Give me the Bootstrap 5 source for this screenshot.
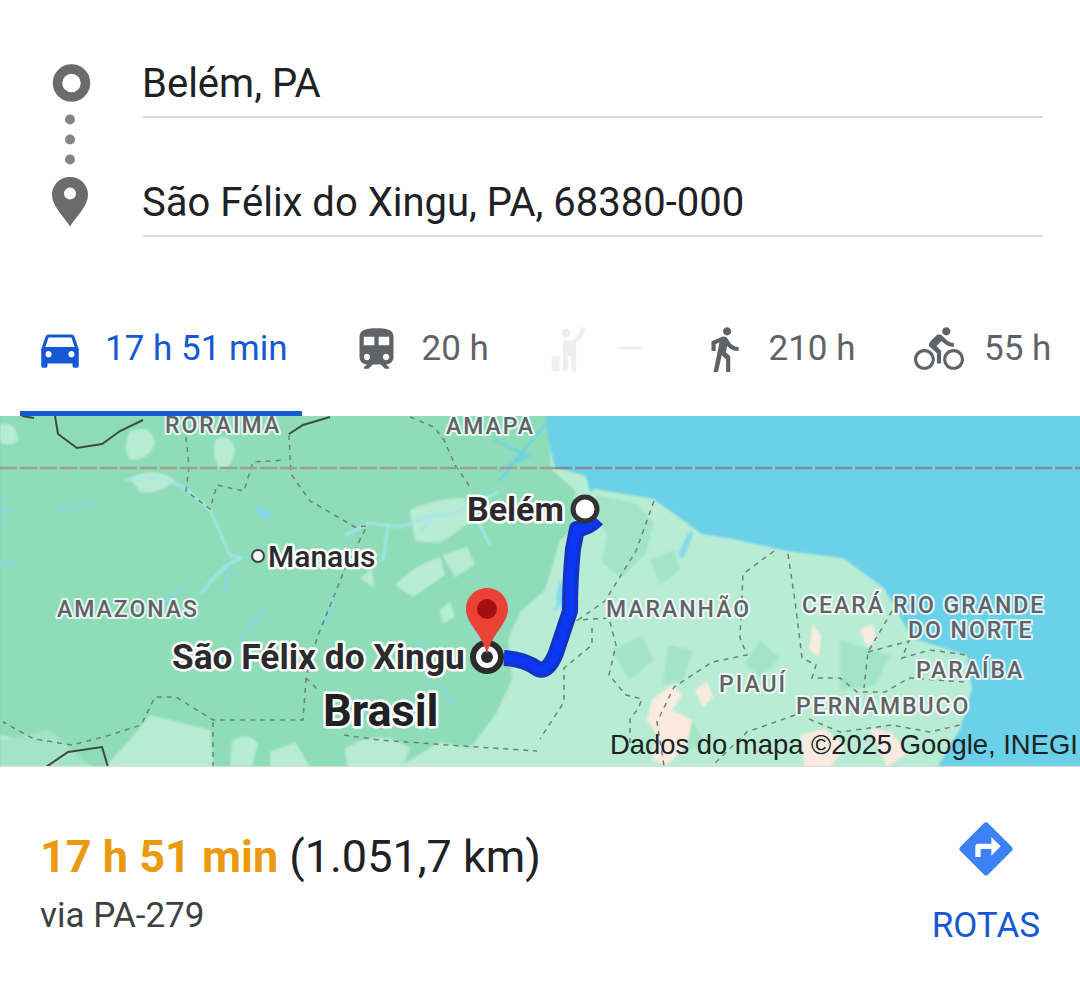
<!DOCTYPE html>
<html lang="pt-BR">

<head>
    <meta charset="UTF-8">
    <meta name="viewport" content="width=device-width, initial-scale=1.0">
    <title>Belém - São Félix do Xingu</title>
    <link href="https://cdn.jsdelivr.net/npm/bootstrap@5.3.0/dist/css/bootstrap.min.css" rel="stylesheet">
    <style>
        body {
            font-family: Roboto, "Liberation Sans", sans-serif;
            background-color: #fff;
            color: #202124;
            margin: 0;
        }

        .route-box {
            padding: 58px 37px 0 0;
        }

        .route-rail {
            width: 143px;
            flex: none;
        }

        .route-rail svg {
            display: block;
        }

        .route-input.form-control {
            height: 60px;
            padding: 0 0 8px;
            font-size: 40px;
            line-height: 1;
            text-indent: -1px;
            color: #202124;
            border: 0;
            border-bottom: 2px solid #d9dadc;
            border-radius: 0;
            background: transparent;
        }

        .route-gap {
            height: 59px;
        }

        .mode-tabs {
            display: grid;
            grid-template-columns: 315.5px 192.5px 155.5px 215.5px 1fr;
            padding-left: 20px;
            margin-top: 43px;
        }

        .mode-tab {
            display: flex;
            align-items: center;
            height: 136px;
            padding: 2px 0 0 15px;
            border-top: 5px solid transparent;
            border-bottom: 5px solid transparent;
            font-size: 35px;
            color: #5f6368;
            white-space: nowrap;
        }

        .mode-tab svg {
            flex: none;
            fill: #5f6368;
            margin-right: 20px;
        }

        .mode-tab.is-active {
            width: 282px;
            color: #1558d6;
            border-bottom-color: #1558d6;
        }

        .mode-tab.is-active svg {
            fill: #1558d6;
        }

        .mode-tab.is-off {
            color: #eeeeee;
        }

        .mode-tab.is-off svg {
            fill: #eeeeee;
        }

        .map-view {
            height: 351px;
            border-bottom: 1px solid #dcdcdc;
            background: #6ad1e8;
            overflow: hidden;
        }

        .map-view svg {
            display: block;
        }

        .map-view text {
            font-family: Roboto, "Liberation Sans", sans-serif;
            paint-order: stroke;
            stroke: #fff;
            stroke-linejoin: round;
        }

        .lbl-state {
            font-size: 23px;
            font-weight: 500;
            letter-spacing: 2px;
            fill: #5f6368;
            stroke-width: 4px;
            stroke-opacity: .8;
        }

        .lbl-city {
            font-weight: 700;
            fill: #2b2b2d;
            stroke-width: 5px;
        }

        .map-view .lbl-attr {
            font-family: "Liberation Sans", Arial, sans-serif;
            font-size: 27.400px;
            fill: #202124;
            stroke-width: 0;
        }

        .trip-bar {
            padding: 58px 40px 0 40px;
        }

        .trip-time {
            font-size: 45px;
            line-height: 64px;
        }

        .trip-time strong {
            color: #ea9a0c;
            font-weight: 700;
        }

        .trip-via {
            font-size: 35px;
            line-height: 44px;
            margin-top: 5px;
            color: #3c4043;
        }

        .trip-action {
            color: #1558d6;
            font-size: 35px;
            line-height: 44px;
            margin-top: -8px;
        }

        .rotas-label {
            margin-top: 23px;
        }
    </style>
</head>

<body>
    <div class="route-box d-flex">
        <div class="route-rail">
            <svg width="143" height="170" viewBox="0 58 143 170">
                <circle cx="71.500" cy="83" r="14" fill="none" stroke="#6b6b6b" stroke-width="9.500" />
                <circle cx="70" cy="119.500" r="5" fill="#80868b" />
                <circle cx="70" cy="139.500" r="5" fill="#80868b" />
                <circle cx="70" cy="159.500" r="5" fill="#80868b" />
                <path fill="#6b6b6b" fill-rule="evenodd"
                    d="M70 177c-10 0-18 7.800-18 17.500 0 12 12 22 18 32 6-10 18-20 18-32C88 184.800 80 177 70 177zm0 10.500a6 6 0 1 1 0 12 6 6 0 0 1 0-12z" />
            </svg>
        </div>
        <div class="flex-grow-1">
            <input class="route-input form-control" type="text" value="Belém, PA">
            <div class="route-gap"></div>
            <input class="route-input form-control" type="text" value="São Félix do Xingu, PA, 68380-000">
        </div>
    </div>

    <div class="mode-tabs">
        <div class="mode-tab is-active">
            <svg width="50" height="50" viewBox="0 0 24 24">
                <path d="M18.920 6.010C18.720 5.420 18.160 5 17.500 5h-11c-.66 0-1.210.42-1.420 1.010L3 12v8c0 .55.45 1 1 1h1c.55 0 1-.45 1-1v-1h12v1c0 .55.45 1 1 1h1c.55 0 1-.45 1-1v-8l-2.080-5.990zM6.500 16c-.83 0-1.500-.67-1.500-1.500S5.670 13 6.500 13s1.500.67 1.500 1.500S7.330 16 6.500 16zm11 0c-.83 0-1.500-.67-1.500-1.500s.67-1.500 1.500-1.500 1.500.67 1.500 1.500-.67 1.500-1.500 1.500zM5 11l1.500-4.500h11L19 11H5z" />
            </svg>
            <span>17 h 51 min</span>
        </div>
        <div class="mode-tab">
            <svg width="51" height="51" viewBox="0 0 24 24">
                <path d="M12 2c-4 0-8 .5-8 4v9.500C4 17.430 5.570 19 7.500 19L6 20.500v.5h2.230l2-2H14l2 2h2v-.5L16.500 19c1.930 0 3.500-1.570 3.500-3.500V6c0-3.500-3.580-4-8-4zM7.500 17c-.83 0-1.500-.67-1.500-1.500S6.670 14 7.500 14s1.500.67 1.500 1.500S8.330 17 7.500 17zm3.500-7H6V6h5v4zm2 0V6h5v4h-5zm3.500 7c-.83 0-1.500-.67-1.500-1.500s.67-1.500 1.500-1.500 1.500.67 1.500 1.500-.67 1.500-1.500 1.500z" />
            </svg>
            <span>20 h</span>
        </div>
        <div class="mode-tab is-off">
            <svg width="53" height="53" viewBox="0 0 24 24">
                <circle cx="10.500" cy="4.500" r="2" />
                <path d="M17 2h2c-.2 3-1.600 5.300-4 6.500V22h-2.200v-7h-1.600v7H9V9.500C9 8.500 9.800 8 10.500 8h2.500c2.200-.8 3.700-3 4-6zM4 15h3.500v7H4z" />
            </svg>
            <span>—</span>
        </div>
        <div class="mode-tab">
            <svg width="50" height="50" viewBox="0 0 24 24">
                <path d="M13.500 5.500c1.100 0 2-.9 2-2s-.9-2-2-2-2 .9-2 2 .9 2 2 2zM9.800 8.900L7 23h2.100l1.800-8 2.100 2v6h2v-7.500l-2.100-2 .6-3C14.800 12 16.800 13 19 13v-2c-1.900 0-3.500-1-4.300-2.400l-1-1.600c-.4-.6-1-1-1.700-1-.3 0-.5.1-.8.1L6 8.300V13h2V9.600l1.800-.7" />
            </svg>
            <span>210 h</span>
        </div>
        <div class="mode-tab">
            <svg width="50" height="50" viewBox="0 0 24 24">
                <path d="M15.500 5.500c1.100 0 2-.9 2-2s-.9-2-2-2-2 .9-2 2 .9 2 2 2zM5 12c-2.800 0-5 2.200-5 5s2.200 5 5 5 5-2.200 5-5-2.200-5-5-5zm0 8.500c-1.900 0-3.500-1.600-3.500-3.500s1.600-3.500 3.500-3.500 3.500 1.600 3.500 3.500-1.600 3.500-3.500 3.500zm5.800-10l2.400-2.400.8.8c1.300 1.300 3 2.100 5.100 2.100V9c-1.500 0-2.700-.6-3.600-1.500l-1.900-1.900c-.5-.4-1-.6-1.600-.6s-1.100.2-1.400.6L7.800 8.400c-.4.4-.6.9-.6 1.400 0 .6.2 1.100.6 1.400L11 14v5h2v-6.200l-2.200-2.300zM19 12c-2.800 0-5 2.200-5 5s2.200 5 5 5 5-2.200 5-5-2.200-5-5-5zm0 8.500c-1.900 0-3.500-1.600-3.500-3.500s1.600-3.500 3.500-3.500 3.500 1.600 3.500 3.500-1.600 3.500-3.500 3.500z" />
            </svg>
            <span>55 h</span>
        </div>
    </div>

    <div class="map-view">
        <svg width="1080" height="351" viewBox="0 416 1080 351">
            <defs>
                <filter id="soft" x="-5%" y="-5%" width="110%" height="110%">
                    <feGaussianBlur stdDeviation="1.200" />
                </filter>
            </defs>
            <!-- land, coords are page coords so they read straight off the screenshot -->
            <g filter="url(#soft)">
                <path fill="#b8ecd4"
                    d="M0 410H543L548 440 555 467 586 476 590 492 595 489 654 499 702 534 733 539 788 551 843 558 884 588 912 638 967 655 972 689 960 729 936 770H0z" />
                <path fill="#8fdcb9"
                    d="M0 410H545L552 470 575 490 572 530 560 540 545 590 520 612 508 640 512 680 495 715 470 748 440 742 390 772H215L210 730 150 715 130 740 100 772 60 745 0 735z" />
                <path fill="#a3e4c6"
                    d="M596 495l40 8 18 20-8 30-24 25-20-15 5-30-14-15zM650 560l25-10 5 20-20 15zM612 650l30-15 12 25-25 20zM668 645l25 5-10 30-20 5zM760 640l20 18-20 20-15-15zM840 640l50 15-15 30-35 5zM660 725l30-8 15 25-30 15zM0 740l50-10 40 36H0z" />
                <path fill="#b8ecd4"
                    d="M0 425q15-5 18 15-8 8-18 2zM130 432q20-10 25 10-5 18-25 18-8-14 0-28zM215 440q15-8 20 8-2 20-14 22-10-12-6-30zM130 478q25-12 45 2-15 15-35 12zM410 510q25-12 55-12l5 25-30 20-25-2zM442 555l25-8 8 18-20 12zM395 585q20-20 45-28l5 18-32 22zM360 578l12-10 2 20zM440 610l10-8 5 14-12 8zM232 742q15-12 26 2l-6 22h-22zM345 748q30-16 50-8l15 8-8 20h-55zM270 752l25-10 15 25h-40z" />
                <path fill="#fbeadf"
                    d="M652 700l20-15 10 10-10 15 20 10-5 25-20 20-15-5 5-25-10-15zM695 690l12-8 6 15-10 10zM813 625l8 10-2 22-10-8zM860 630l12-6 5 15-10 8zM800 735l25-6 20 18-15 20h-25zM870 728l22 5 15 20-20 14z" />
            </g>
            <!-- rivers -->
            <g fill="none" stroke="#86d9ea" stroke-width="2.500" stroke-linecap="round" filter="url(#soft)">
                <path d="M125 480q35-6 60 8l25 22 20 45 12 3M242 558q-20 6-40 35" stroke="#a6e6ee" />
                <path d="M345 535l25-12 30 4 10-3 18-8 25-2 25-12 20-10M388 525l-5 35M430 520l-10 12M475 515l15 30" stroke="#a6e6ee" />
                <path d="M60 510l35-6M0 565l20-5M0 512l12-3M160 605l20-15M225 590l5-25M265 610l-25 30M335 590l-10 35" />
                <path d="M418 640l12 45M470 620l10 25M440 685l15 20M565 590l-10 20" />
                <path d="M515 460l30-35M500 470l30-15M500 480l25-30M495 440l30 15" stroke="#6ad1e8" />
            </g>
            <path fill="#86d9ea" filter="url(#soft)" d="M253 505l12 4 10 10-14-2zM560 580l8 14-4 20-8-16zM690 530l-12 25 5 4 10-25z" />
            <!-- state borders -->
            <g fill="none" stroke="#6b8278" stroke-width="1.500" stroke-dasharray="5 5">
                <path d="M186 437L189 467 186 491 210 509 217 485 234 489 244 491 253 462 286 460" />
                <path d="M289 435L291 474 310 501 355 527 367 526 344 571 317 638 306 678 320 692" />
                <path d="M306 678L303 720 213 720 176 697 155 697 141 725 110 735 72 745 34 739 3 722" />
                <path d="M213 722V766M344 735L379 740 448 745 537 751" />
                <path d="M410 417L434 427 444 440 455 465 472 490" />
                <path d="M654 501L636 551 605 601 578 620 609 618 616 645 609 675 626 695 642 699 638 709 630 719 630 745" />
                <path d="M592 628V645L564 668V702L540 739" />
                <path d="M774 551L743 574 740 638 747 655 712 662 674 687 657 722 664 766" />
                <path d="M788 554L795 601 802 658 816 665 812 678 840 678 857 692 885 692 909 678 964 682" />
                <path d="M892 611L868 652 864 688M868 652L909 641 902 658 930 650 967 655" />
                <path d="M795 715L747 732 712 766M809 719L840 732 892 725 930 732 964 724" />
            </g>
            <!-- country border -->
            <g fill="none" stroke="#3f4a45" stroke-width="2">
                <path d="M22 416L34 418M55 416L58 434 77 448 102 444 120 431 143 420" />
                <path d="M289 434L303 425 330 417" />
                <path d="M46 767L68 752 102 747 108 767" />
            </g>
            <!-- equator -->
            <path d="M0 468H555" stroke="#9c9f90" stroke-width="2.500" stroke-dasharray="17 3" fill="none" />
            <path d="M555 468H1080" stroke="#7c8a9c" stroke-width="2.500" stroke-dasharray="17 3" fill="none" />
            <!-- route -->
            <path d="M597 519q-8 9-20 10l-4 20q-3 30-3 62l-14 42q-8 20-18 16-14-10-34-11" fill="none" stroke="#1434c8"
                stroke-width="16" stroke-linejoin="round" />
            <path d="M597 519q-8 9-20 10l-4 20q-3 30-3 62l-14 42q-8 20-18 16-14-10-34-11" fill="none" stroke="#0b38f5"
                stroke-width="8" stroke-linejoin="round" />
            <!-- labels -->
            <text class="lbl-state" x="165" y="433">RORAIMA</text>
            <text class="lbl-state" x="446" y="434">AMAPA</text>
            <text class="lbl-state" x="57" y="617">AMAZONAS</text>
            <text class="lbl-state" x="606" y="617">MARANHÃO</text>
            <text class="lbl-state" x="802" y="613">CEARÁ</text>
            <text class="lbl-state" x="893" y="613">RIO GRANDE</text>
            <text class="lbl-state" x="908" y="638">DO NORTE</text>
            <text class="lbl-state" x="916" y="678">PARAÍBA</text>
            <text class="lbl-state" x="719" y="692">PIAUÍ</text>
            <text class="lbl-state" x="796" y="714">PERNAMBUCO</text>
            <text class="lbl-city" x="268" y="567" font-size="30" style="font-weight:500">Manaus</text>
            <text class="lbl-city" x="467" y="521" font-size="34">Belém</text>
            <text class="lbl-city" x="172" y="669" font-size="35.300">São Félix do Xingu</text>
            <text class="lbl-city" x="323" y="726" font-size="45" style="fill:#202124">Brasil</text>
            <text class="lbl-attr" x="610" y="754">Dados do mapa ©2025 Google, INEGI</text>
            <!-- markers -->
            <circle cx="258" cy="556" r="6" fill="#f1f3f4" stroke="#444" stroke-width="2" />
            <circle cx="585" cy="509" r="12" fill="#fff" stroke="#333" stroke-width="5" />
            <circle cx="487" cy="657" r="14" fill="#fff" stroke="#2b2b2d" stroke-width="6" />
            <circle cx="487" cy="657" r="6" fill="#2b2b2d" />
            <path d="M487 588c-12 0-21 9.500-21 21 0 15 16 24 21 45 5-21 21-30 21-45 0-11.500-9-21-21-21z" fill="#ea4335" />
            <circle cx="487" cy="609" r="10" fill="#a50e0e" />
        </svg>
    </div>

    <div class="trip-bar d-flex justify-content-between">
        <div>
            <div class="trip-time"><strong>17 h 51 min</strong> (1.051,7 km)</div>
            <div class="trip-via">via PA-279</div>
        </div>
        <div class="trip-action d-flex flex-column align-items-center">
            <svg width="64" height="64" viewBox="0 0 24 24">
                <path fill="#3b82f6" d="M21.710 11.290l-9-9c-.39-.39-1.020-.39-1.410 0l-9 9c-.39.39-.39 1.020 0 1.410l9 9c.39.39 1.020.39 1.410 0l9-9c.39-.38.39-1.010 0-1.410zM14 14.500V12h-4v3H8v-4c0-.55.45-1 1-1h5V7.500l3.500 3.500-3.500 3.500z" />
            </svg>
            <span class="rotas-label">ROTAS</span>
        </div>
    </div>

    <script src="https://cdn.jsdelivr.net/npm/bootstrap@5.3.0/dist/js/bootstrap.bundle.min.js"></script>
</body>

</html>
